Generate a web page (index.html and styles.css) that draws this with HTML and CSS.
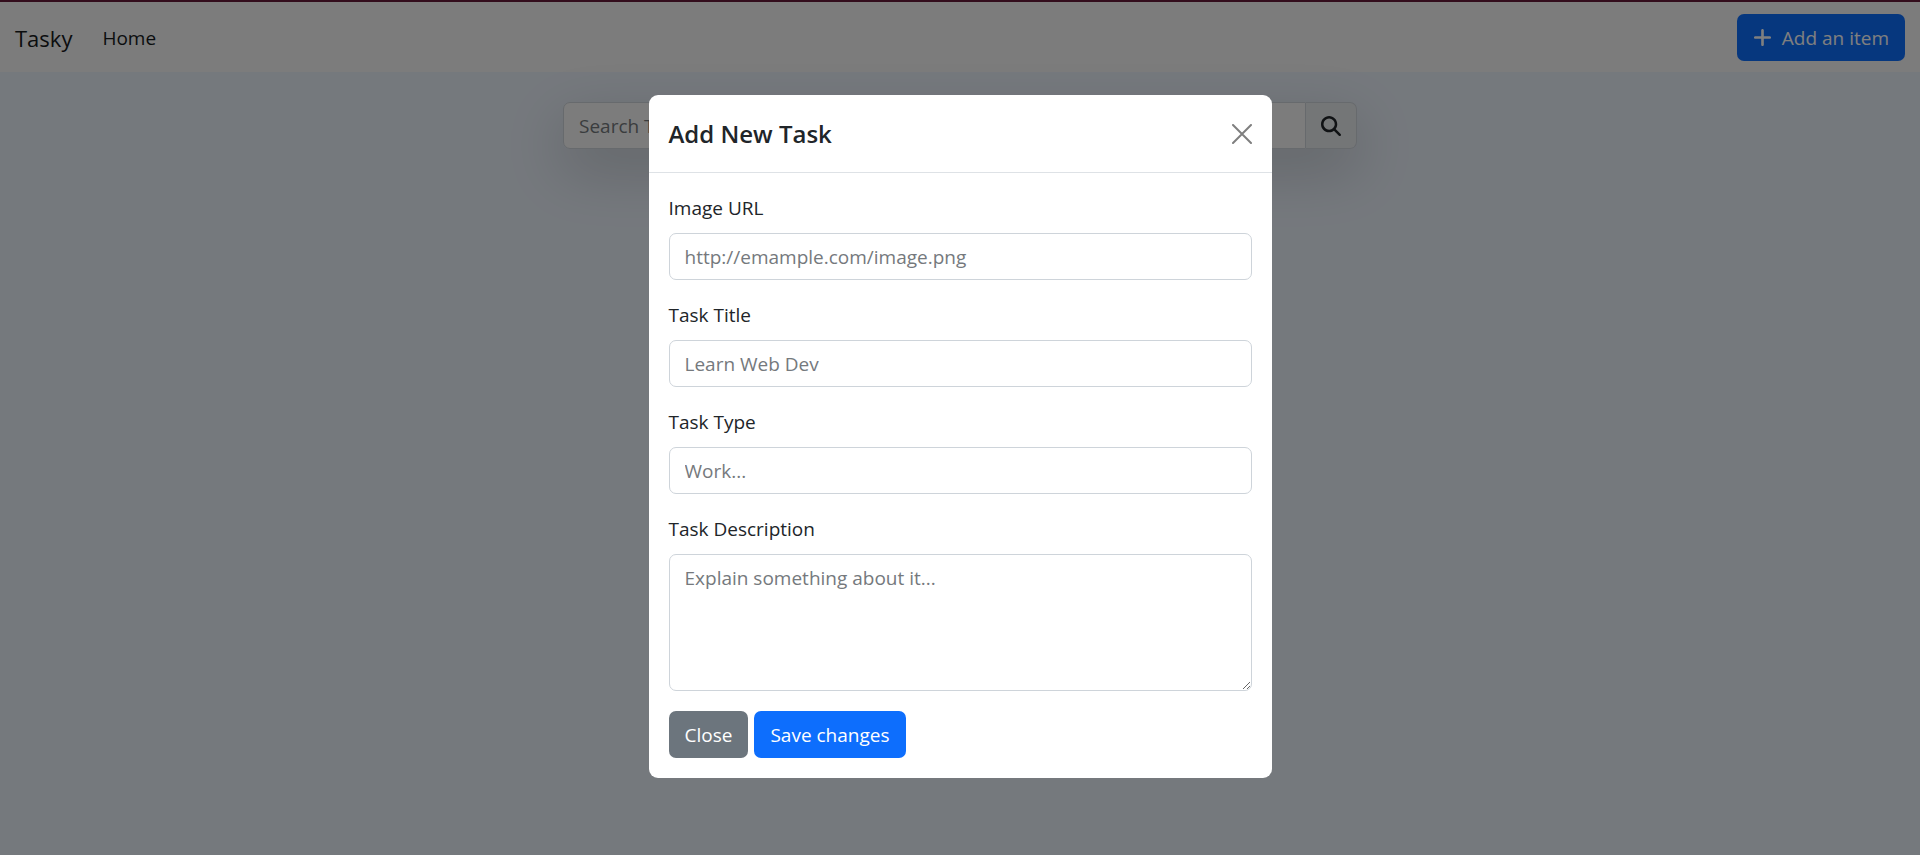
FILE: index.html
```html
<!DOCTYPE html>
<html lang="en">
<head>
<meta charset="utf-8">
<meta name="viewport" content="width=device-width, initial-scale=1">
<title>Tasky</title>
<link rel="stylesheet" href="styles.css">
</head>
<body>
<nav class="navbar">
  <a class="brand" href="#">Tasky</a>
  <a class="nav-link" href="#">Home</a>
  <button class="btn btn-primary btn-add" type="button">
    <svg class="icon-plus" viewBox="0 0 448 512" aria-hidden="true"><path d="M256 80c0-18-14-32-32-32s-32 14-32 32v144H48c-18 0-32 14-32 32s14 32 32 32h144v144c0 18 14 32 32 32s32-14 32-32V288h144c18 0 32-14 32-32s-14-32-32-32H256V80z"/></svg>
    Add an item
  </button>
</nav>
<main class="page">
  <form class="search">
    <input class="control search-input" type="search" placeholder="Search Task" aria-label="Search Task">
    <button class="search-btn" type="button" aria-label="Search">
      <svg class="icon-search" viewBox="0 0 512 512" aria-hidden="true"><path d="M416 208c0 46-15 88-40 123l127 127c12 12 12 33 0 45s-33 12-45 0L331 376c-35 25-77 40-123 40C93 416 0 323 0 208S93 0 208 0s208 93 208 208zM208 352a144 144 0 1 0 0-288 144 144 0 1 0 0 288z"/></svg>
    </button>
  </form>
</main>
<div class="backdrop"></div>
<div class="modal">
  <section class="dialog" role="dialog" aria-modal="true" aria-labelledby="dialog-title">
    <header class="dialog-header">
      <h1 class="dialog-title" id="dialog-title">Add New Task</h1>
      <button class="close" type="button" aria-label="Close">
        <svg class="icon-close" viewBox="0 0 20 20" aria-hidden="true"><path d="M1 1l18 18M19 1L1 19"/></svg>
      </button>
    </header>
    <form class="dialog-body">
      <div class="field">
        <label for="image-url">Image URL</label>
        <input class="control" id="image-url" type="url" placeholder="http://emample.com/image.png">
      </div>
      <div class="field">
        <label for="task-title">Task Title</label>
        <input class="control" id="task-title" type="text" placeholder="Learn Web Dev">
      </div>
      <div class="field">
        <label for="task-type">Task Type</label>
        <input class="control" id="task-type" type="text" placeholder="Work...">
      </div>
      <div class="field">
        <label for="task-description">Task Description</label>
        <textarea class="control" id="task-description" rows="4" placeholder="Explain something about it..."></textarea>
      </div>
      <div class="actions">
        <button class="btn btn-secondary" type="button">Close</button>
        <button class="btn btn-primary" type="button">Save changes</button>
      </div>
    </form>
  </section>
</div>
</body>
</html>
```

FILE: styles.css
```css
*, *::before, *::after {
  box-sizing: border-box;
}

body {
  margin: 0;
  min-height: 100vh;
  border-top: 2px solid #661a38;
  background: #ebf2fb;
  color: #212529;
  font: 19px/30px "Segoe UI", "Open Sans", sans-serif;
}

button, input, textarea {
  font: inherit;
  color: inherit;
}

.navbar {
  display: flex;
  align-items: center;
  padding: 12px 15px 11px;
  background: #f8f8f8;
}

.brand {
  margin-right: 30px;
  color: #171a1d;
  font-size: 22px;
  text-decoration: none;
}

.nav-link {
  color: #171a1d;
  text-decoration: none;
}

.btn {
  height: 47px;
  padding: 0 16px;
  border: 0;
  border-radius: 7px;
  color: #fff;
}

.btn-primary {
  background: #0d6efd;
}

.btn-secondary {
  background: #6c757d;
}

.btn-add {
  display: flex;
  align-items: center;
  gap: 10px;
  margin-left: auto;
}

.icon-plus {
  width: 19px;
  height: 21px;
  fill: currentColor;
}

.page {
  display: flex;
  justify-content: center;
  padding: 30px 15px;
}

.search {
  display: flex;
  width: 794px;
  max-width: 100%;
  border-radius: 7px;
  box-shadow: 0 20px 60px rgba(0, 0, 0, 0.175);
}

.control {
  display: block;
  width: 100%;
  height: 47px;
  padding: 1px 15px 0;
  border: 1px solid #ced4da;
  border-radius: 7px;
  background: #fff;
  outline: 0;
}

.control::placeholder {
  color: #75797d;
  opacity: 1;
}

.search-input {
  flex: 1;
  min-width: 0;
  border-radius: 7px 0 0 7px;
  background: #f8f8f8;
}

.search-btn {
  display: flex;
  align-items: center;
  justify-content: center;
  width: 51px;
  border: 1px solid #ced4da;
  border-left: 0;
  border-radius: 0 7px 7px 0;
  background: #e9ecef;
}

.icon-search {
  width: 20px;
  height: 20px;
  fill: currentColor;
}

.backdrop {
  position: fixed;
  inset: 0;
  background: rgba(0, 0, 0, 0.5);
}

.modal {
  position: fixed;
  inset: 0;
  display: flex;
  align-items: flex-start;
  justify-content: center;
  padding: 95px 15px 20px;
  overflow-y: auto;
}

.dialog {
  width: 623px;
  max-width: 100%;
  border-radius: 9px;
  background: #fff;
}

.dialog-header {
  display: flex;
  align-items: center;
  justify-content: space-between;
  padding: 20px;
  border-bottom: 1px solid #dee2e6;
}

.dialog-title {
  margin: 0;
  font-size: 24px;
  line-height: 37px;
  font-weight: 600;
}

.close {
  display: flex;
  padding: 0;
  border: 0;
  background: none;
}

.icon-close {
  width: 20px;
  height: 20px;
  fill: none;
  stroke: #7f7f7f;
  stroke-width: 2;
  stroke-linecap: round;
}

.dialog-body {
  padding: 20px;
}

.field {
  margin-bottom: 20px;
}

.field label {
  display: block;
  margin-bottom: 10px;
}

textarea.control {
  height: auto;
  padding: 8px 15px 7px;
  resize: vertical;
}

.actions {
  display: flex;
  gap: 6px;
}
```
